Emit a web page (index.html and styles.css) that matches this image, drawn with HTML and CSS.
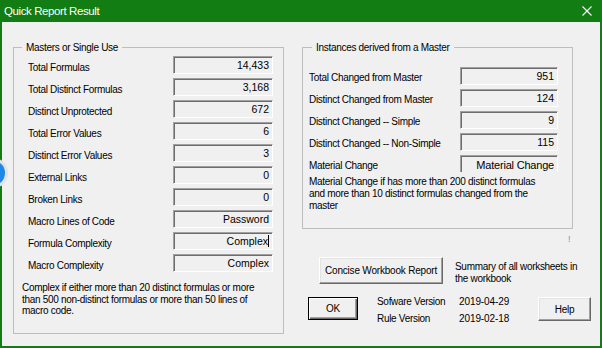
FILE: index.html
```html
<!DOCTYPE html>
<html lang="en">
<head>
    <meta charset="UTF-8">
    <meta name="viewport" content="width=device-width, initial-scale=1.0">
    <title>Quick Report Result</title>
    <link rel="stylesheet" href="styles.css">
</head>
<body>
    <div class="window">
        <div class="titlebar">
            <span class="title">Quick Report Result</span>
            <svg class="close" width="10" height="10" viewBox="0 0 10 10">
                <path d="M0.5 0.5L9.5 9.5M9.5 0.5L0.5 9.5" stroke="#fff" stroke-width="1.1" fill="none"/>
            </svg>
        </div>

        <div class="client">
            <fieldset class="group group-masters">
                <legend>Masters or Single Use</legend>
                <div class="rows">
                    <div class="row"><span class="label">Total Formulas</span><span class="box">14,433</span></div>
                    <div class="row"><span class="label">Total Distinct Formulas</span><span class="box">3,168</span></div>
                    <div class="row"><span class="label">Distinct Unprotected</span><span class="box">672</span></div>
                    <div class="row"><span class="label">Total Error Values</span><span class="box">6</span></div>
                    <div class="row"><span class="label">Distinct Error Values</span><span class="box">3</span></div>
                    <div class="row"><span class="label">External Links</span><span class="box">0</span></div>
                    <div class="row"><span class="label">Broken Links</span><span class="box">0</span></div>
                    <div class="row"><span class="label">Macro Lines of Code</span><span class="box">Password</span></div>
                    <div class="row"><span class="label">Formula Complexity</span><span class="box">Complex<span class="caret"></span></span></div>
                    <div class="row"><span class="label">Macro Complexity</span><span class="box">Complex</span></div>
                </div>
                <p class="note">Complex if either more than 20 distinct formulas or more<br>than 500 non-distinct formulas or more than 50 lines of<br>macro code.</p>
            </fieldset>

            <div class="side">
                <fieldset class="group group-instances">
                    <legend>Instances derived from a Master</legend>
                    <div class="rows">
                        <div class="row"><span class="label">Total Changed from Master</span><span class="box">951</span></div>
                        <div class="row"><span class="label">Distinct Changed from Master</span><span class="box">124</span></div>
                        <div class="row"><span class="label">Distinct Changed -- Simple</span><span class="box">9</span></div>
                        <div class="row"><span class="label">Distinct Changed -- Non-Simple</span><span class="box">115</span></div>
                        <div class="row row-short"><span class="label">Material Change</span><span class="box box-open">Material Change</span></div>
                    </div>
                    <p class="note">Material Change if has more than 200 distinct formulas<br>and more than 10 distinct formulas changed from the<br>master</p>
                </fieldset>

                <div class="bang">!</div>

                <div class="concise">
                    <button class="btn btn-concise">Concise Workbook Report</button>
                    <p class="summary">Summary of all worksheets in<br>the workbook</p>
                </div>

                <div class="footer">
                    <button class="btn btn-default">OK</button>
                    <dl class="versions">
                        <dt>Sofware Version</dt><dd>2019-04-29</dd>
                        <dt>Rule Version</dt><dd>2019-02-18</dd>
                    </dl>
                    <button class="btn btn-help">Help</button>
                </div>
            </div>
        </div>
    </div>

    <div class="pin"></div>
</body>
</html>
```

FILE: styles.css
```css
* {
    box-sizing: border-box;
}

body {
    margin: 0;
    font-family: "Liberation Sans", Arial, sans-serif;
    font-size: 10px;
    letter-spacing: -0.3px;
    color: #000;
    position: relative;
}

.window {
    width: 602px;
    height: 348px;
    background: #f0f0f0;
    border: 2px solid #117d12;
    border-top: 0;
    display: flex;
    flex-direction: column;
    overflow: hidden;
}

.titlebar {
    height: 22px;
    background: #117d12;
    color: #fff;
    display: flex;
    align-items: center;
    justify-content: space-between;
    padding: 0 8px 0 2px;
}

.title {
    font-size: 11.5px;
    letter-spacing: -0.4px;
}

.client {
    display: flex;
    gap: 18px;
    padding: 19px 0 0 11px;
}

.group {
    margin: 0;
    padding: 0;
    min-width: 0;
    width: 271px;
    border: 1px solid #bdbdbd;
}

.group legend {
    padding: 0 4px;
    line-height: 13px;
}

.group-masters {
    height: 293px;
}

.group-masters legend {
    margin-left: 8px;
}

.group-instances {
    height: 188px;
}

.group-instances legend {
    margin-left: 9px;
}

.rows {
    display: flex;
    flex-direction: column;
}

.row {
    display: flex;
    height: 22px;
}

.label {
    line-height: 13px;
}

.box {
    height: 18px;
    line-height: 16px;
    text-align: right;
    padding-right: 3px;
    font-size: 10.5px;
    letter-spacing: 0;
    background: #f0f0f0;
    border: 1px solid;
    border-color: #a0a0a0 #fff #fff #a0a0a0;
    box-shadow: inset 1px 1px #6d6d6d;
}

.caret {
    display: inline-block;
    width: 1px;
    height: 12px;
    background: #000;
    vertical-align: -2px;
}

.group-masters .rows {
    padding: 2px 0 0 14px;
}

.group-masters .label {
    width: 145px;
    padding-top: 5px;
}

.group-masters .box {
    width: 100px;
}

.group-instances .rows {
    padding: 13px 0 0 6px;
}

.group-instances .label {
    width: 151px;
    padding-top: 4px;
}

.group-instances .box {
    width: 98px;
}

.row-short {
    height: 21px;
}

.box-open {
    height: 17px;
    border-bottom: 0;
    padding-top: 1px;
    font-size: 11px;
    letter-spacing: -0.2px;
}

.note {
    margin: 0;
    line-height: 11.5px;
}

.group-masters .note {
    margin-top: 6px;
    padding-left: 8px;
}

.group-instances .note {
    padding-left: 6px;
    line-height: 12px;
}

.side {
    width: 289px;
    display: flex;
    flex-direction: column;
}

.bang {
    margin-top: 5px;
    padding-left: 266px;
    font-size: 9px;
    line-height: 10px;
    color: #7d8ea8;
}

.btn {
    font: inherit;
    letter-spacing: inherit;
    color: #000;
    padding: 0;
    background: #f0f0f0;
    border: 1px solid;
    border-color: #fff #696969 #696969 #fff;
    box-shadow: inset -1px -1px #a0a0a0, inset 1px 1px #e3e3e3;
}

.concise {
    display: flex;
    margin-top: 13px;
}

.btn-concise {
    width: 124px;
    height: 27px;
    margin-left: 17px;
    letter-spacing: -0.2px;
}

.summary {
    margin: 0 0 0 12px;
    padding-top: 4px;
    line-height: 12px;
}

.footer {
    display: flex;
    align-items: flex-start;
    margin-top: 8px;
}

.btn-default {
    width: 50px;
    height: 23px;
    margin: 4px 0 0 6px;
    border-color: #000;
    box-shadow: inset 1px 1px #fff, inset -1px -1px #696969, inset -2px -2px #a0a0a0;
}

.versions {
    display: grid;
    grid-template-columns: 82px auto;
    margin: 0 0 0 19px;
    line-height: 17px;
}

.versions dt,
.versions dd {
    margin: 0;
}

.versions dd {
    letter-spacing: -0.1px;
}

.btn-help {
    width: 53px;
    height: 24px;
    margin: 4px 0 0 auto;
}

.pin {
    position: absolute;
    left: -17px;
    top: 161px;
    width: 22px;
    height: 24px;
    border-radius: 50%;
    background: #1f87e5;
    box-shadow: 0 0 0 3px #e2e2e2;
}
```
